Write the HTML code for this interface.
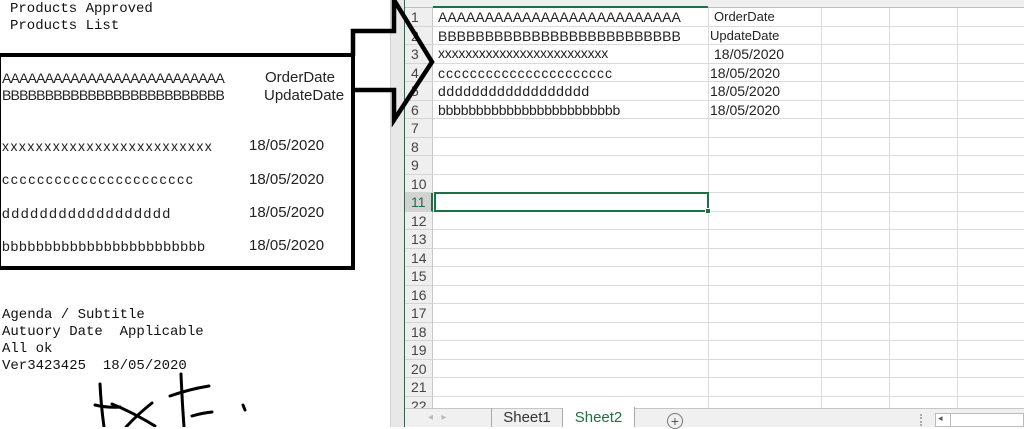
<!DOCTYPE html>
<html><head><meta charset="utf-8"><style>
*{margin:0;padding:0;box-sizing:border-box}
body{width:1024px;height:427px;position:relative;overflow:hidden;background:#fff;font-family:"Liberation Sans",sans-serif}
.a{position:absolute;white-space:nowrap}
.mono{font-family:"Liberation Mono",monospace;font-size:14px;color:#111;line-height:17px;white-space:pre}
.bx{font-size:14px;letter-spacing:-0.8px;color:#222}
.bl{font-size:14px;color:#222}
.rh{position:absolute;left:405px;width:28px;height:18.5px;background:#efefef;border-bottom:1px solid #d4d4d4;border-right:1px solid #c8c8c8;color:#444;font-size:14px;line-height:18px;padding-left:6px}
.row{position:absolute;left:433px;width:591px;height:18.5px;border-bottom:1px solid #dadada}
.vl{position:absolute;top:0;width:1px;height:408px;background:#dadada}
.c{position:absolute;font-size:14px;color:#222;line-height:18px;white-space:nowrap}
</style></head><body>
<div class="a mono" style="left:10px;top:1px">Products Approved</div>
<div class="a mono" style="left:10px;top:18px">Products List</div>
<div class="a" style="left:0;top:53px;width:355px;height:217px;border:4px solid #000;border-left:1px solid #000"></div>
<div class="a bx" style="left:2px;top:70px">AAAAAAAAAAAAAAAAAAAAAAAAAA</div>
<div class="a bx" style="left:2px;top:87px">BBBBBBBBBBBBBBBBBBBBBBBBBB</div>
<div class="a" style="left:265px;top:69px;font-size:15px;color:#222">OrderDate</div>
<div class="a" style="left:264px;top:87px;font-size:15px;color:#222">UpdateDate</div>
<div class="a bl" style="left:2px;top:138px;letter-spacing:1.45px">xxxxxxxxxxxxxxxxxxxxxxxxx</div>
<div class="a bl" style="left:2px;top:171px;letter-spacing:1.75px">cccccccccccccccccccccc</div>
<div class="a bl" style="left:2px;top:205px;letter-spacing:1.65px">dddddddddddddddddd</div>
<div class="a bl" style="left:2px;top:238px;letter-spacing:0.7px">bbbbbbbbbbbbbbbbbbbbbbbb</div>
<div class="a" style="left:249px;top:137px;font-size:15px;color:#222">18/05/2020</div>
<div class="a" style="left:249px;top:171px;font-size:15px;color:#222">18/05/2020</div>
<div class="a" style="left:249px;top:204px;font-size:15px;color:#222">18/05/2020</div>
<div class="a" style="left:249px;top:237px;font-size:15px;color:#222">18/05/2020</div>
<div class="a mono" style="left:2px;top:307px">Agenda / Subtitle</div>
<div class="a mono" style="left:2px;top:324px">Autuory Date  Applicable</div>
<div class="a mono" style="left:2px;top:341px">All ok</div>
<div class="a mono" style="left:2px;top:358px">Ver3423425  18/05/2020</div>
<div class="a" style="left:390px;top:0;width:15px;height:427px;background:#e8e8e8;border-left:1px solid #cfcfcf;border-right:1px solid #1e7145"></div>
<div class="vl" style="left:708px"></div><div class="vl" style="left:821px"></div><div class="vl" style="left:889px"></div><div class="vl" style="left:957px"></div>
<div class="a" style="left:405px;top:0;width:619px;height:8px;background:#efefef;border-bottom:1px solid #bdbdbd"></div>
<div class="a" style="left:433px;top:6px;width:275px;height:2px;background:#1e7145"></div>
<div class="rh" style="top:8px">1</div><div class="row" style="top:8px"></div>
<div class="rh" style="top:26.5px">2</div><div class="row" style="top:26.5px"></div>
<div class="rh" style="top:45px">3</div><div class="row" style="top:45px"></div>
<div class="rh" style="top:63.5px">4</div><div class="row" style="top:63.5px"></div>
<div class="rh" style="top:82px">5</div><div class="row" style="top:82px"></div>
<div class="rh" style="top:100.5px">6</div><div class="row" style="top:100.5px"></div>
<div class="rh" style="top:119px">7</div><div class="row" style="top:119px"></div>
<div class="rh" style="top:137.5px">8</div><div class="row" style="top:137.5px"></div>
<div class="rh" style="top:156px">9</div><div class="row" style="top:156px"></div>
<div class="rh" style="top:174.5px">10</div><div class="row" style="top:174.5px"></div>
<div class="rh" style="top:193px;background:#d2d2d2;color:#1e7145;border-right:2px solid #1e7145">11</div><div class="row" style="top:193px"></div>
<div class="rh" style="top:211.5px">12</div><div class="row" style="top:211.5px"></div>
<div class="rh" style="top:230px">13</div><div class="row" style="top:230px"></div>
<div class="rh" style="top:248.5px">14</div><div class="row" style="top:248.5px"></div>
<div class="rh" style="top:267px">15</div><div class="row" style="top:267px"></div>
<div class="rh" style="top:285.5px">16</div><div class="row" style="top:285.5px"></div>
<div class="rh" style="top:304px">17</div><div class="row" style="top:304px"></div>
<div class="rh" style="top:322.5px">18</div><div class="row" style="top:322.5px"></div>
<div class="rh" style="top:341px">19</div><div class="row" style="top:341px"></div>
<div class="rh" style="top:359.5px">20</div><div class="row" style="top:359.5px"></div>
<div class="rh" style="top:378px">21</div><div class="row" style="top:378px"></div>
<div class="rh" style="top:396.5px">22</div><div class="row" style="top:396.5px"></div>
<div class="c" style="left:438px;top:8px">AAAAAAAAAAAAAAAAAAAAAAAAAA</div>
<div class="c" style="left:438px;top:26.5px">BBBBBBBBBBBBBBBBBBBBBBBBBB</div>
<div class="c" style="left:438px;top:44px;letter-spacing:-0.2px">xxxxxxxxxxxxxxxxxxxxxxxxx</div>
<div class="c" style="left:438px;top:63.5px;letter-spacing:0.95px">cccccccccccccccccccccc</div>
<div class="c" style="left:438px;top:82px;letter-spacing:0.65px">dddddddddddddddddd</div>
<div class="c" style="left:438px;top:100.5px;letter-spacing:-0.2px">bbbbbbbbbbbbbbbbbbbbbbbb</div>
<div class="c" style="left:714px;top:8px;font-size:13px">OrderDate</div>
<div class="c" style="left:710px;top:26.5px;font-size:13px">UpdateDate</div>
<div class="c" style="left:714px;top:45px">18/05/2020</div>
<div class="c" style="left:710px;top:63.5px">18/05/2020</div>
<div class="c" style="left:710px;top:82px">18/05/2020</div>
<div class="c" style="left:710px;top:100.5px">18/05/2020</div>
<div class="a" style="left:434px;top:192px;width:275px;height:20px;border:2px solid #1e7145"></div>
<div class="a" style="left:705px;top:208px;width:6px;height:6px;background:#1e7145;border:1px solid #fff"></div>
<div class="a" style="left:405px;top:408px;width:619px;height:19px;background:#f0f0f0;border-top:1px solid #c6c6c6"></div>
<div class="a" style="left:428px;top:412px;color:#bbb;font-size:10px">◂ &nbsp; ▸</div>
<div class="a" style="left:491px;top:408px;width:72px;height:19px;border-left:1px solid #aaa;border-right:1px solid #aaa;font-size:15px;color:#333;text-align:center;line-height:20px">Sheet1</div>
<div class="a" style="left:563px;top:407px;width:72px;height:20px;background:#fff;border-right:1px solid #aaa;font-size:15px;color:#1e7145;text-align:center;line-height:22px">Sheet2</div>
<div class="a" style="left:667px;top:413px;width:16px;height:16px;border:1px solid #777;border-radius:50%;text-align:center;font-size:14px;line-height:14px;color:#555">+</div>
<div class="a" style="left:920px;top:414px;width:2px;height:12px;border-left:2px dotted #aaa"></div>
<div class="a" style="left:935px;top:413px;width:89px;height:14px;background:#fff;border:1px solid #bbb"></div>
<div class="a" style="left:938px;top:413px;font-size:9px;color:#555">◂</div>
<div class="a" style="left:950px;top:413px;width:1px;height:14px;background:#bbb"></div>
<svg class="a" style="left:0;top:0" width="1024" height="427">
<polyline points="353,56 353,31 394,31 394,0 432,62 394,120 394,90 353,90" fill="none" stroke="#000" stroke-width="4.5" stroke-linejoin="miter"/>
<g fill="none" stroke="#000" stroke-width="3" stroke-linecap="round">
<path d="M100,384 Q101,405 104,427"/>
<path d="M95,405 Q108,408 120,407"/>
<path d="M112,404 Q132,412 155,426"/>
<path d="M126,427 Q138,414 152,403"/>
<path d="M181,374 Q182,400 184,427"/>
<path d="M170,396 Q190,389 209,386"/>
<path d="M192,416 Q202,413 212,412"/>
<path d="M243,405 L245,410"/>
</g>
</svg>
</body></html>
